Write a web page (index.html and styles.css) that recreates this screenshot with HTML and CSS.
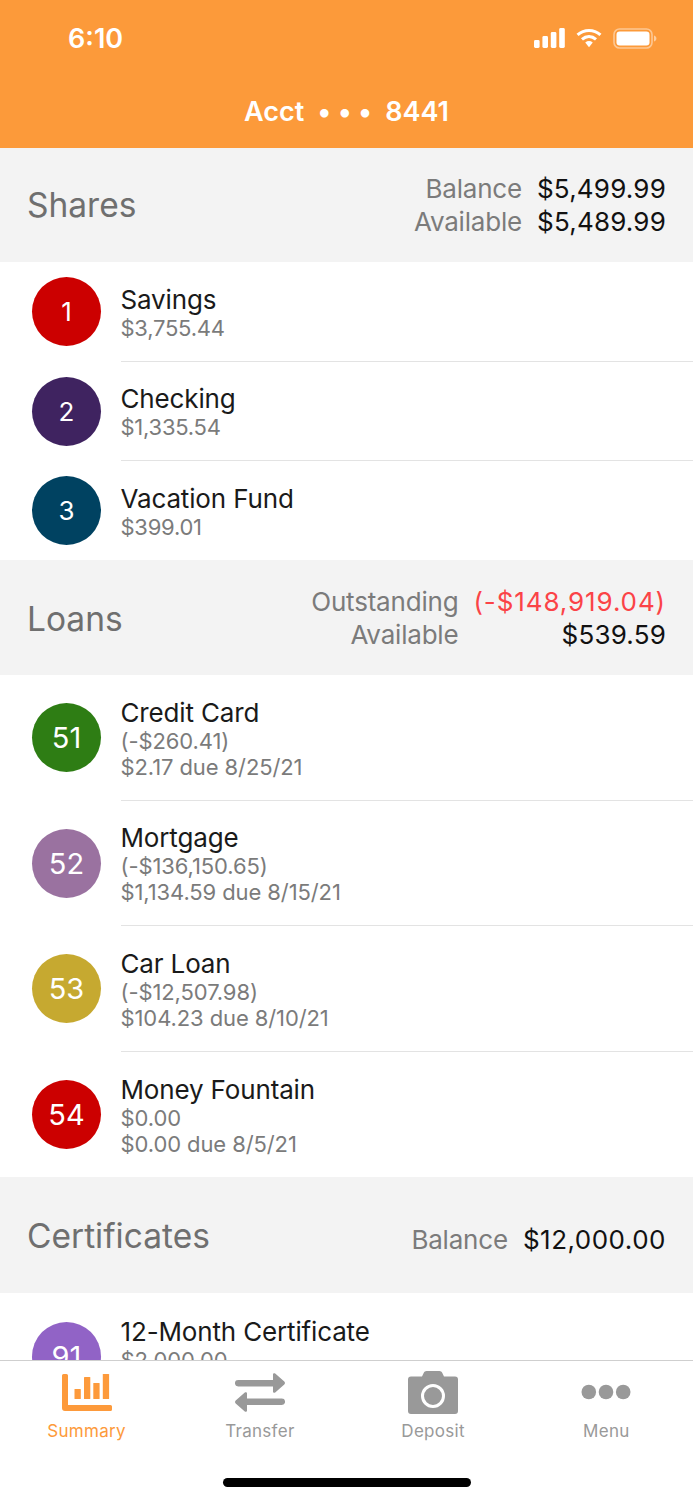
FILE: index.html
```html
<!DOCTYPE html>
<html lang="en">
<head>
<meta charset="utf-8">
<title>Accounts</title>
<link rel="stylesheet" href="styles.css">
</head>
<body>
<div class="app">
  <header class="top">
    <div class="status">
      <span class="time">6:10</span>
      <div class="status-icons">
        <svg width="31" height="20" viewBox="0 0 31 20"><g fill="#fff"><rect x="0" y="12" width="5.600" height="8" rx="1.400"/><rect x="8.400" y="8" width="5.600" height="12" rx="1.400"/><rect x="16.800" y="4" width="5.600" height="16" rx="1.400"/><rect x="25.200" y="0" width="5.600" height="20" rx="1.400"/></g></svg>
        <svg width="26" height="20" viewBox="0 0 27 20"><g fill="none" stroke="#fff" stroke-width="3.200"><path d="M1.600 6.800C8.600 .6 18.400 .6 25.400 6.800"/><path d="M6.200 11.400C10.600 7.600 16.400 7.600 20.800 11.400"/></g><path fill="#fff" d="M9.600 14.600C12 12.600 15 12.600 17.400 14.600L13.500 19.600Z"/></svg>
        <svg width="44" height="21" viewBox="0 0 44 21"><rect x="1" y="1" width="38" height="19" rx="5.500" fill="none" stroke="#fff" stroke-opacity=".45" stroke-width="1.600"/><rect x="3.500" y="3.500" width="33" height="14" rx="3.200" fill="#fff"/><path d="M41 7.500c1.700.5 2.400 1.600 2.400 3s-.7 2.500-2.400 3z" fill="#fff" fill-opacity=".5"/></svg>
      </div>
    </div>
    <div class="acct">Acct <span class="dots">• • •</span> 8441</div>
  </header>

  <main class="content">
    <section class="head shares">
      <h2 class="head-title">Shares</h2>
      <div class="totals">
        <span class="lbl">Balance</span><span class="val">$5,499.99</span>
        <span class="lbl">Available</span><span class="val">$5,489.99</span>
      </div>
    </section>
    <ul class="list">
      <li class="row short"><span class="badge red">1</span><div class="info"><div class="name">Savings</div><div class="sub">$3,755.44</div></div></li>
      <li class="row short"><span class="badge plum">2</span><div class="info"><div class="name">Checking</div><div class="sub">$1,335.54</div></div></li>
      <li class="row short"><span class="badge navy">3</span><div class="info"><div class="name">Vacation Fund</div><div class="sub">$399.01</div></div></li>
    </ul>

    <section class="head loans">
      <h2 class="head-title">Loans</h2>
      <div class="totals">
        <span class="lbl">Outstanding</span><span class="val neg">(-$148,919.04)</span>
        <span class="lbl">Available</span><span class="val">$539.59</span>
      </div>
    </section>
    <ul class="list">
      <li class="row tall"><span class="badge green big">51</span><div class="info"><div class="name">Credit Card</div><div class="sub">(-$260.41)</div><div class="sub">$2.17 due 8/25/21</div></div></li>
      <li class="row tall"><span class="badge mauve big">52</span><div class="info"><div class="name">Mortgage</div><div class="sub">(-$136,150.65)</div><div class="sub">$1,134.59 due 8/15/21</div></div></li>
      <li class="row tall"><span class="badge gold big">53</span><div class="info"><div class="name">Car Loan</div><div class="sub">(-$12,507.98)</div><div class="sub">$104.23 due 8/10/21</div></div></li>
      <li class="row tall"><span class="badge red big">54</span><div class="info"><div class="name">Money Fountain</div><div class="sub">$0.00</div><div class="sub">$0.00 due 8/5/21</div></div></li>
    </ul>

    <section class="head cert">
      <h2 class="head-title">Certificates</h2>
      <div class="totals low">
        <span class="lbl">Balance</span><span class="val">$12,000.00</span>
      </div>
    </section>
    <ul class="list">
      <li class="row tall"><span class="badge violet big">91</span><div class="info"><div class="name">12-Month Certificate</div><div class="sub">$2,000.00</div><div class="sub blank"></div></div></li>
    </ul>
  </main>

  <nav class="tabs">
    <div class="tab active">
      <svg width="50" height="46" viewBox="0 0 50 46"><g fill="#fd9a3b" transform="translate(0 4)"><path d="M0 1.500A1.500 1.500 0 0 1 1.500 0h3A1.500 1.500 0 0 1 6 1.500V31h42.500a1.500 1.500 0 0 1 1.500 1.500v3a1.500 1.500 0 0 1-1.500 1.500H3a3 3 0 0 1-3-3z"/><rect x="12.500" y="15" width="6.300" height="10" rx=".6"/><rect x="22" y="3" width="6.300" height="22" rx=".6"/><rect x="31.300" y="9" width="6.300" height="16" rx=".6"/><rect x="40.800" y="0" width="6.300" height="25" rx=".6"/></g></svg>
      <span class="tab-label">Summary</span>
    </div>
    <div class="tab">
      <svg width="50" height="46" viewBox="0 0 50 46"><g fill="#999" transform="translate(0 3)"><path d="M3.200 7H38V1.500c0-1.200 1.200-1.800 2.200-1L49.300 8.500c.9.800.9 2.200 0 3L40.200 19.500c-1 .8-2.200.2-2.200-1V13.500H3.200a3.250 3.250 0 0 1 0-6.500z"/><path d="M3.200 7H38V1.500c0-1.200 1.200-1.800 2.200-1L49.300 8.500c.9.800.9 2.200 0 3L40.200 19.500c-1 .8-2.200.2-2.200-1V13.500H3.200a3.250 3.250 0 0 1 0-6.500z" transform="rotate(180 25 19.500)"/></g></svg>
      <span class="tab-label">Transfer</span>
    </div>
    <div class="tab">
      <svg width="50" height="46" viewBox="0 0 50 46"><path fill="#999" fill-rule="evenodd" transform="translate(0 1)" d="M14 5.500l1.800-3.700C16.300.7 17.300 0 18.500 0h13c1.200 0 2.200.7 2.700 1.800L36 5.500h11a3 3 0 0 1 3 3V40a3 3 0 0 1-3 3H3a3 3 0 0 1-3-3V8.500a3 3 0 0 1 3-3zM25 13a12 12 0 1 0 0 24 12 12 0 0 0 0-24zm0 3a9 9 0 1 1 0 18 9 9 0 0 1 0-18z"/></svg>
      <span class="tab-label">Deposit</span>
    </div>
    <div class="tab">
      <svg width="50" height="46" viewBox="0 0 50 46"><g fill="#999"><circle cx="7.800" cy="22" r="7.300"/><circle cx="25" cy="22" r="7.300"/><circle cx="42.200" cy="22" r="7.300"/></g></svg>
      <span class="tab-label">Menu</span>
    </div>
    <div class="home-bar"></div>
  </nav>
</div>
</body>
</html>
```
FILE: styles.css
```css
* { box-sizing: border-box; }
html, body { margin: 0; padding: 0; background: #fff; }
body { font-family: Inter, "Liberation Sans", sans-serif; }
.app { width: 693px; height: 1500px; display: flex; flex-direction: column; overflow: hidden; }

.top { height: 148px; flex: none; background: #fc9a3a; color: #fff; }
.status { height: 76px; display: flex; justify-content: space-between; align-items: center; padding: 0 36px 0 68px; }
.time { font-size: 27px; font-weight: 600; }
.status-icons { display: flex; align-items: center; gap: 11px; }
.acct { text-align: center; font-size: 27px; font-weight: 600; line-height: 36px; padding-top: 18px; }
.dots { margin: 0 6.500px; }

.content { flex: 1; min-height: 0; overflow: hidden; }
.head { background: #f3f3f3; display: flex; justify-content: space-between; align-items: center; padding: 0 27px; }
.head.shares { height: 114.250px; }
.head.loans { height: 115px; }
.head.cert { height: 116px; }
.head-title { margin: 0; font-size: 33.500px; font-weight: 400; color: #6f6f6f; }
.loans .head-title { padding-top: 3px; }
.cert .head-title { padding-top: 2px; }
.totals { display: grid; grid-template-columns: auto auto; column-gap: 15px; font-size: 26px; line-height: 32.500px; padding-top: 1px; }
.loans .totals { padding-top: 2px; }
.totals.low { padding-top: 9px; }
.lbl { text-align: right; color: #7b7b7b; letter-spacing: -.2px; }
.val { text-align: right; color: #111; letter-spacing: .2px; }
.val.neg { color: #fb4347; letter-spacing: .9px; }
.low .val { letter-spacing: .5px; }

.list { list-style: none; margin: 0; padding: 0; }
.row { display: flex; align-items: center; padding-left: 32px; gap: 19.500px; }
.row.short { height: 99.250px; }
.row.tall { height: 125.600px; }
.info { flex: 1; align-self: stretch; display: flex; flex-direction: column; justify-content: center; border-bottom: 1px solid #e3e3e3; padding-top: 2px; }
.row:last-child .info { border-bottom: 0; }
.name { font-size: 26px; line-height: 31px; color: #1a1a1a; letter-spacing: -.15px; }
.sub { font-size: 22px; line-height: 26px; color: #7b7b7b; letter-spacing: -.1px; }
.short .sub { letter-spacing: -.25px; }
.sub.blank { height: 26px; }

.badge { flex: none; width: 69px; height: 69px; border-radius: 50%; color: #fff; font-size: 26px; display: flex; align-items: center; justify-content: center; }
.badge.big { font-size: 29px; }
.red { background: #cc0000; }
.plum { background: #3f2360; }
.navy { background: #004261; }
.green { background: #2e7d14; }
.mauve { background: #9a72a0; }
.gold { background: #c6a930; }
.violet { background: #9163c6; }

.tabs { position: relative; height: 140px; flex: none; background: #fff; border-top: 1px solid #cfcfcf; display: grid; grid-template-columns: repeat(4, 173.250px); align-items: start; }
.tab { display: flex; flex-direction: column; align-items: center; padding-top: 9px; color: #999; }
.tab svg { display: block; }
.tab-label { font-size: 17px; line-height: 20px; margin-top: 5px; letter-spacing: .3px; }
.tab.active { color: #fd9a3b; }
.home-bar { position: absolute; left: 223px; top: 117px; width: 248px; height: 9px; border-radius: 5px; background: #000; }
```
